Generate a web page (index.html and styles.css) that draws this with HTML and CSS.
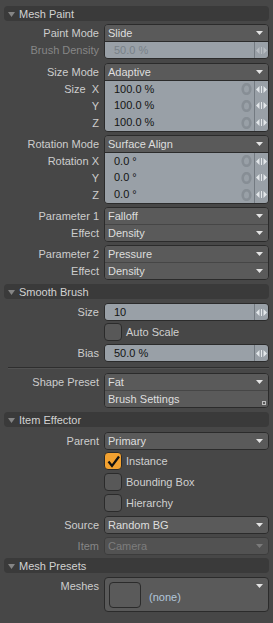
FILE: index.html
```html
<!DOCTYPE html>
<html lang="en">
<head>
  <meta charset="UTF-8">
  <meta name="viewport" content="width=device-width, initial-scale=1.0">
  <title>Mesh Paint</title>
  <link rel="stylesheet" href="styles.css">
</head>
<body>
  <div class="panel">

    <!-- Mesh Paint -->
    <div class="head"><svg class="tri" width="7" height="5" viewBox="0 0 7 5"><path d="M0 0H7L3.5 5Z"/></svg>Mesh Paint</div>

    <div class="group">
      <div class="labels">
        <div class="lbl">Paint Mode</div>
        <div class="lbl off">Brush Density</div>
      </div>
      <div class="box">
        <div class="row drop"><span class="val">Slide</span><svg class="arrow" width="7" height="4" viewBox="0 0 7 4"><path d="M0 0H7L3.5 4Z"/></svg></div>
        <div class="row num off"><span class="val">50.0 %</span><span class="spin"><svg width="11" height="9" viewBox="0 0 11 9"><path d="M0 4.5L3.5 1V8Z M5 1H6V8H5Z M7.5 1L11 4.5L7.5 8Z"/></svg></span></div>
      </div>
    </div>

    <div class="group g2">
      <div class="labels">
        <div class="lbl">Size Mode</div>
        <div class="lbl">Size<span class="axis">X</span></div>
        <div class="lbl">Y</div>
        <div class="lbl">Z</div>
      </div>
      <div class="box">
        <div class="row drop"><span class="val">Adaptive</span><svg class="arrow" width="7" height="4" viewBox="0 0 7 4"><path d="M0 0H7L3.5 4Z"/></svg></div>
        <div class="row num"><span class="val">100.0 %</span><svg class="ring" width="11" height="12" viewBox="0 0 11 12"><ellipse cx="5.5" cy="6" rx="3.8" ry="4.8"/></svg><span class="spin"><svg width="11" height="9" viewBox="0 0 11 9"><path d="M0 4.5L3.5 1V8Z M5 1H6V8H5Z M7.5 1L11 4.5L7.5 8Z"/></svg></span></div>
        <div class="row num"><span class="val">100.0 %</span><svg class="ring" width="11" height="12" viewBox="0 0 11 12"><ellipse cx="5.5" cy="6" rx="3.8" ry="4.8"/></svg><span class="spin"><svg width="11" height="9" viewBox="0 0 11 9"><path d="M0 4.5L3.5 1V8Z M5 1H6V8H5Z M7.5 1L11 4.5L7.5 8Z"/></svg></span></div>
        <div class="row num"><span class="val">100.0 %</span><svg class="ring" width="11" height="12" viewBox="0 0 11 12"><ellipse cx="5.5" cy="6" rx="3.8" ry="4.8"/></svg><span class="spin"><svg width="11" height="9" viewBox="0 0 11 9"><path d="M0 4.5L3.5 1V8Z M5 1H6V8H5Z M7.5 1L11 4.5L7.5 8Z"/></svg></span></div>
      </div>
    </div>

    <div class="group">
      <div class="labels">
        <div class="lbl">Rotation Mode</div>
        <div class="lbl">Rotation X</div>
        <div class="lbl">Y</div>
        <div class="lbl">Z</div>
      </div>
      <div class="box">
        <div class="row drop"><span class="val">Surface Align</span><svg class="arrow" width="7" height="4" viewBox="0 0 7 4"><path d="M0 0H7L3.5 4Z"/></svg></div>
        <div class="row num"><span class="val">0.0 °</span><svg class="ring" width="11" height="12" viewBox="0 0 11 12"><ellipse cx="5.5" cy="6" rx="3.8" ry="4.8"/></svg><span class="spin"><svg width="11" height="9" viewBox="0 0 11 9"><path d="M0 4.5L3.5 1V8Z M5 1H6V8H5Z M7.5 1L11 4.5L7.5 8Z"/></svg></span></div>
        <div class="row num"><span class="val">0.0 °</span><svg class="ring" width="11" height="12" viewBox="0 0 11 12"><ellipse cx="5.5" cy="6" rx="3.8" ry="4.8"/></svg><span class="spin"><svg width="11" height="9" viewBox="0 0 11 9"><path d="M0 4.5L3.5 1V8Z M5 1H6V8H5Z M7.5 1L11 4.5L7.5 8Z"/></svg></span></div>
        <div class="row num"><span class="val">0.0 °</span><svg class="ring" width="11" height="12" viewBox="0 0 11 12"><ellipse cx="5.5" cy="6" rx="3.8" ry="4.8"/></svg><span class="spin"><svg width="11" height="9" viewBox="0 0 11 9"><path d="M0 4.5L3.5 1V8Z M5 1H6V8H5Z M7.5 1L11 4.5L7.5 8Z"/></svg></span></div>
      </div>
    </div>

    <div class="group">
      <div class="labels">
        <div class="lbl">Parameter 1</div>
        <div class="lbl">Effect</div>
      </div>
      <div class="box">
        <div class="row drop"><span class="val">Falloff</span><svg class="arrow" width="7" height="4" viewBox="0 0 7 4"><path d="M0 0H7L3.5 4Z"/></svg></div>
        <div class="row drop"><span class="val">Density</span><svg class="arrow" width="7" height="4" viewBox="0 0 7 4"><path d="M0 0H7L3.5 4Z"/></svg></div>
      </div>
    </div>

    <div class="group">
      <div class="labels">
        <div class="lbl">Parameter 2</div>
        <div class="lbl">Effect</div>
      </div>
      <div class="box">
        <div class="row drop"><span class="val">Pressure</span><svg class="arrow" width="7" height="4" viewBox="0 0 7 4"><path d="M0 0H7L3.5 4Z"/></svg></div>
        <div class="row drop"><span class="val">Density</span><svg class="arrow" width="7" height="4" viewBox="0 0 7 4"><path d="M0 0H7L3.5 4Z"/></svg></div>
      </div>
    </div>

    <!-- Smooth Brush -->
    <div class="head h2"><svg class="tri" width="7" height="5" viewBox="0 0 7 5"><path d="M0 0H7L3.5 5Z"/></svg>Smooth Brush</div>

    <div class="group m4">
      <div class="labels"><div class="lbl">Size</div></div>
      <div class="box">
        <div class="row num"><span class="val">10</span><span class="spin"><svg width="11" height="9" viewBox="0 0 11 9"><path d="M0 4.5L3.5 1V8Z M5 1H6V8H5Z M7.5 1L11 4.5L7.5 8Z"/></svg></span></div>
      </div>
    </div>

    <div class="check m2">
      <span class="cb"></span>Auto Scale
    </div>

    <div class="group">
      <div class="labels"><div class="lbl">Bias</div></div>
      <div class="box">
        <div class="row num"><span class="val">50.0 %</span><span class="spin"><svg width="11" height="9" viewBox="0 0 11 9"><path d="M0 4.5L3.5 1V8Z M5 1H6V8H5Z M7.5 1L11 4.5L7.5 8Z"/></svg></span></div>
      </div>
    </div>

    <div class="sep"></div>

    <div class="group m4">
      <div class="labels">
        <div class="lbl">Shape Preset</div>
      </div>
      <div class="box">
        <div class="row drop"><span class="val">Fat</span><svg class="arrow" width="7" height="4" viewBox="0 0 7 4"><path d="M0 0H7L3.5 4Z"/></svg></div>
        <div class="row drop btn"><span class="val">Brush Settings</span><span class="grip"></span></div>
      </div>
    </div>

    <!-- Item Effector -->
    <div class="head h2"><svg class="tri" width="7" height="5" viewBox="0 0 7 5"><path d="M0 0H7L3.5 5Z"/></svg>Item Effector</div>

    <div class="group m5">
      <div class="labels"><div class="lbl">Parent</div></div>
      <div class="box">
        <div class="row drop"><span class="val">Primary</span><svg class="arrow" width="7" height="4" viewBox="0 0 7 4"><path d="M0 0H7L3.5 4Z"/></svg></div>
      </div>
    </div>

    <div class="check m2">
      <span class="cb on"><svg width="16" height="16" viewBox="0 0 16 16"><path d="M3.5 8.5L7 13L14 3.5"/></svg></span>Instance
    </div>
    <div class="check">
      <span class="cb"></span>Bounding Box
    </div>
    <div class="check">
      <span class="cb"></span>Hierarchy
    </div>

    <div class="group m4">
      <div class="labels"><div class="lbl">Source</div></div>
      <div class="box">
        <div class="row drop"><span class="val">Random BG</span><svg class="arrow" width="7" height="4" viewBox="0 0 7 4"><path d="M0 0H7L3.5 4Z"/></svg></div>
      </div>
    </div>

    <div class="group">
      <div class="labels"><div class="lbl off">Item</div></div>
      <div class="box dis">
        <div class="row drop"><span class="val">Camera</span><svg class="arrow" width="7" height="4" viewBox="0 0 7 4"><path d="M0 0H7L3.5 4Z"/></svg></div>
      </div>
    </div>

    <!-- Mesh Presets -->
    <div class="head"><svg class="tri" width="7" height="5" viewBox="0 0 7 5"><path d="M0 0H7L3.5 5Z"/></svg>Mesh Presets</div>

    <div class="group m4">
      <div class="labels"><div class="lbl">Meshes</div></div>
      <div class="box preset">
        <span class="thumb"></span>
        <span class="none">(none)</span>
        <svg class="arrow" width="7" height="4" viewBox="0 0 7 4"><path d="M0 0H7L3.5 4Z"/></svg>
      </div>
    </div>

  </div>
</body>
</html>
```

FILE: styles.css
```css
body {
  margin: 0;
  background-color: #474747;
  font-family: "Liberation Sans", Arial, sans-serif;
  font-size: 11px;
  color: #cdcdcd;
}
.panel {
  width: 265px;
  padding: 6px 4px 0;
  display: flex;
  flex-direction: column;
}
.head {
  height: 15px;
  background-color: #3a3a3a;
  border-radius: 4px;
  display: flex;
  align-items: center;
  color: #d2d2d2;
  margin-top: 3px;
}
.panel > .head:first-child {
  margin-top: 0;
}
.head.h2 {
  margin-top: 4px;
}
.tri {
  margin: 1px 4px 0 4px;
  fill: #858585;
}
.group {
  display: grid;
  grid-template-columns: 95px 165px;
  column-gap: 5px;
  margin-top: 3px;
}
.g2, .m4 {
  margin-top: 4px;
}
.m5 {
  margin-top: 5px;
}
.m2 {
  margin-top: 2px !important;
}
.labels {
  padding-top: 1px;
  text-align: right;
}
.lbl {
  height: 16px;
  line-height: 16px;
  white-space: nowrap;
}
.lbl + .lbl {
  margin-top: 1px;
}
.lbl.off {
  color: #868686;
}
.axis {
  margin-left: 6px;
}
.box {
  border: 1px solid #2b2b2b;
  border-radius: 4px;
  overflow: hidden;
  background-color: #5a5a5a;
}
.row {
  height: 16px;
  display: flex;
  align-items: center;
}
.row + .row {
  border-top: 1px solid #464646;
}
.row.num + .row.num {
  border-top: 0;
  height: 17px;
}
.val {
  flex: 1;
  white-space: nowrap;
  overflow: hidden;
}
.drop {
  background-color: #5a5a5a;
  color: #dedede;
}
.drop .val {
  padding-left: 3px;
}
.arrow {
  fill: #e4e4e4;
  margin-right: 5px;
}
.num {
  background-color: #99a0a7;
  color: #141414;
  align-items: stretch;
}
.num + .num, .drop + .num {
  border-top-color: #2b2b2b;
}
.num .val {
  padding-left: 9px;
  line-height: 16px;
}
.num + .num .val {
  line-height: 17px;
}
.ring {
  align-self: center;
  fill: none;
  stroke: #878e95;
  stroke-width: 2.6;
  margin-right: 2px;
}
.spin {
  width: 13px;
  border-left: 1px solid #737a81;
  display: flex;
  align-items: center;
  justify-content: center;
}
.spin svg {
  fill: #e3e7ea;
}
.num.off .val {
  color: #788088;
}
.num.off .spin svg {
  fill: #b9bec3;
}
.btn {
  position: relative;
}
.grip {
  position: absolute;
  right: 2px;
  bottom: 2px;
  width: 2px;
  height: 2px;
  border: 1px solid #bdbdbd;
}
.check {
  height: 18px;
  margin-top: 3px;
  margin-left: 100px;
  display: flex;
  align-items: center;
  color: #d0d0d0;
}
.cb {
  width: 16px;
  height: 16px;
  border: 1px solid #2b2b2b;
  border-radius: 4px;
  background-color: #585858;
  margin-right: 4px;
}
.cb.on {
  background-color: #f2a130;
}
.cb.on svg {
  display: block;
  fill: none;
  stroke: #111;
  stroke-width: 2.2;
}
.box.dis {
  border-color: #3c3c3c;
}
.dis .drop {
  background-color: #525252;
  color: #7d7d7d;
}
.dis .arrow {
  fill: #7a7a7a;
}
.sep {
  margin: 5px 0 0 4px;
  border-top: 1px solid #2e2e2e;
  border-bottom: 1px solid #525252;
}
.preset {
  height: 33px;
  display: flex;
  align-items: flex-start;
}
.thumb {
  width: 30px;
  height: 24px;
  margin: 4px 0 0 4px;
  border: 1px solid #2b2b2b;
  border-radius: 4px;
  background-color: #5a5a5a;
}
.none {
  flex: 1;
  margin: 13px 0 0 8px;
  color: #b2c6da;
}
.preset .arrow {
  margin-top: 6px;
}
```
